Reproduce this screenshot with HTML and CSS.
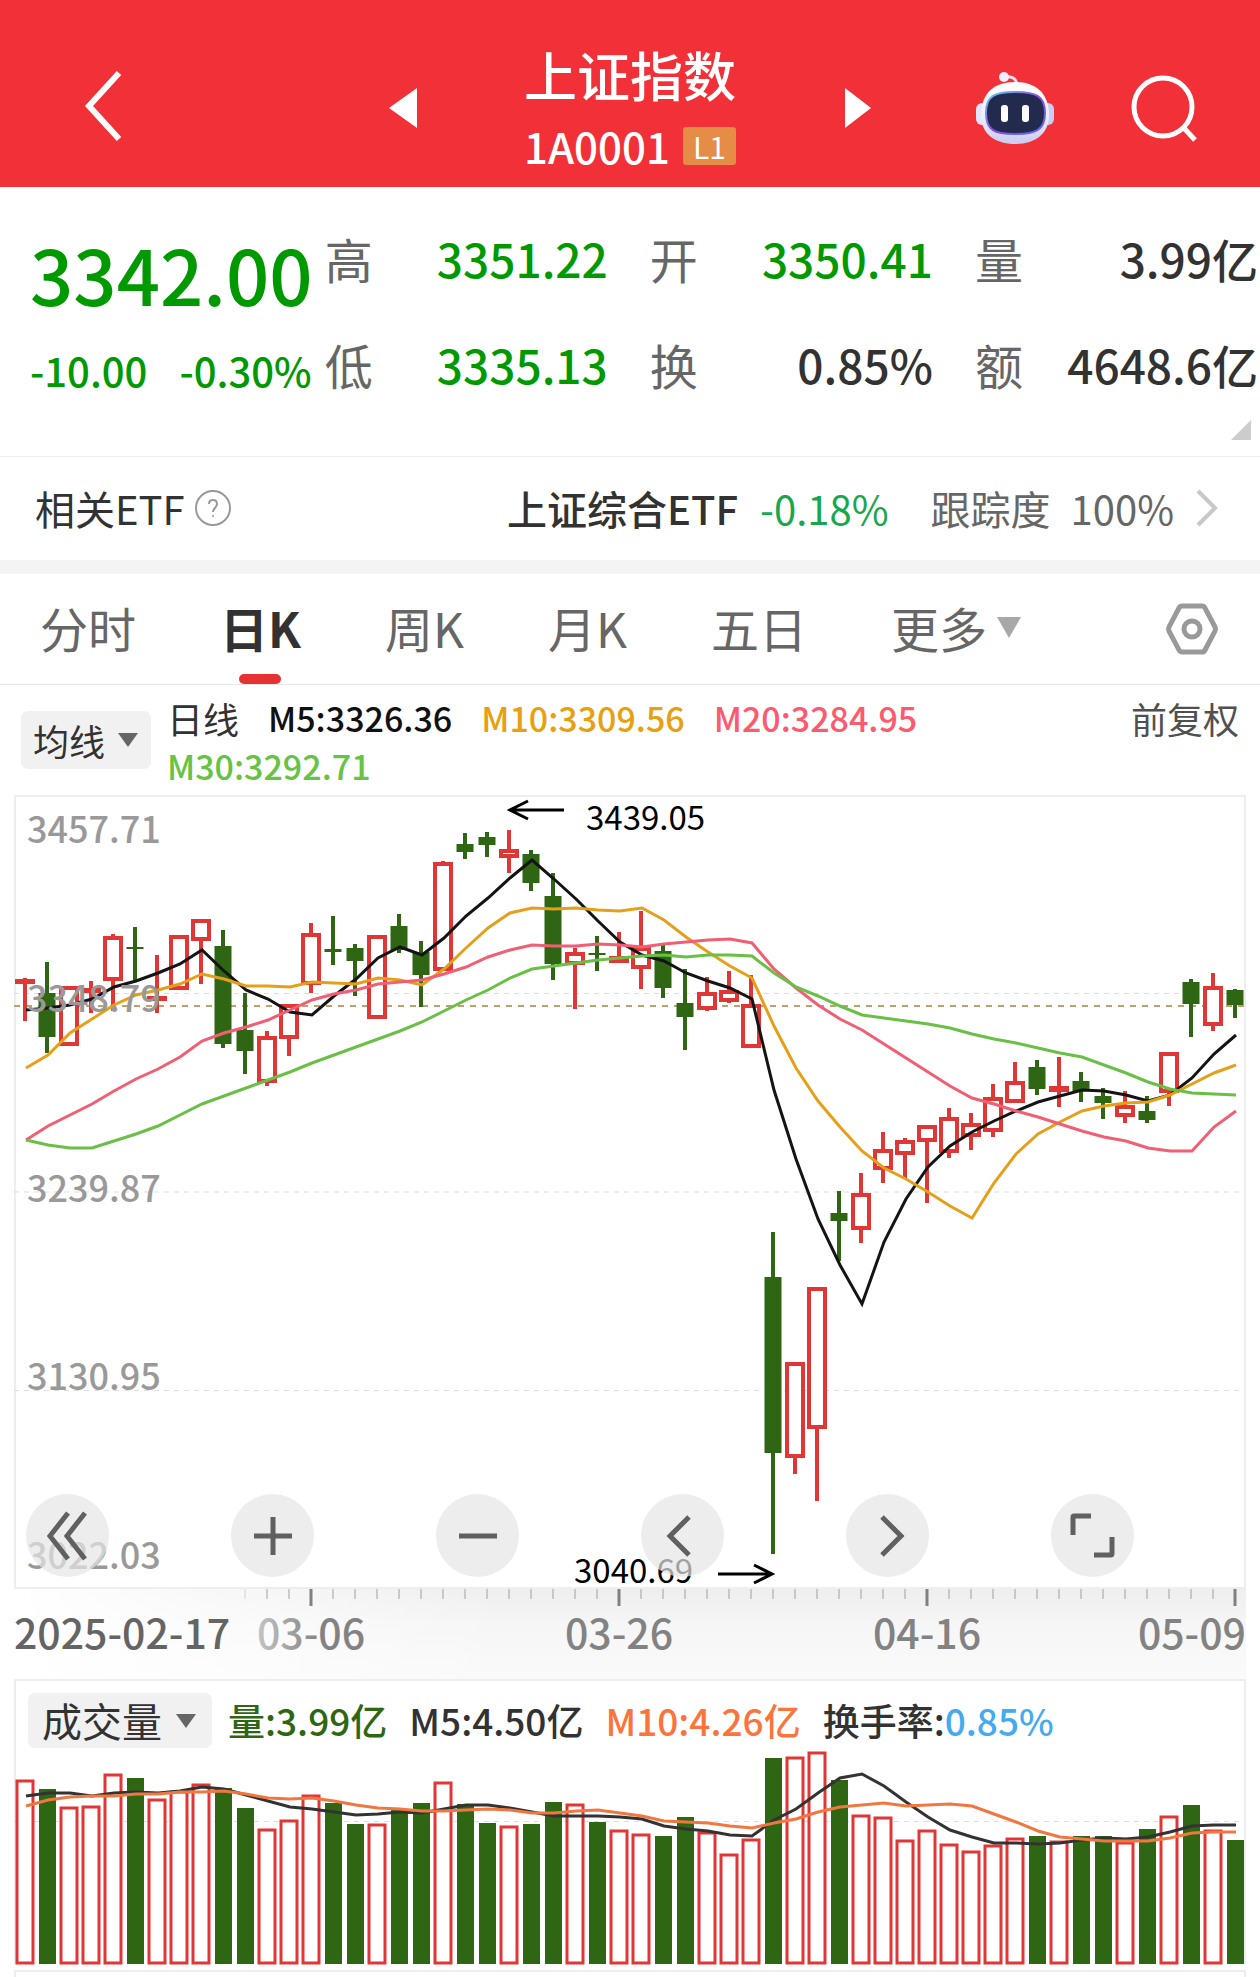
FILE: index.html
```
<!DOCTYPE html>
<html lang="zh-CN">
<head>
    <meta charset="UTF-8">
    <meta name="viewport" content="width=device-width, initial-scale=1.0">
    <title>上证指数</title>
    <link rel="stylesheet" href="styles.css">
</head>
<body>
    <header class="topbar">
        <div class="topbar-left">
            <button class="icon-btn" aria-label="返回">
                <svg width="42" height="72" viewBox="0 0 42 72"><path d="M37 3 L7 36 L37 69" fill="none" stroke="#fff" stroke-width="6"/></svg>
            </button>
        </div>
        <div class="topbar-center">
            <button class="icon-btn" aria-label="上一个">
                <svg width="28" height="40" viewBox="0 0 28 40"><path d="M28 0 V40 L0 20 Z" fill="#fff"/></svg>
            </button>
            <div class="title">
                <h1>上证指数</h1>
                <div class="code">
                    <span>1A0001</span>
                    <span class="level">L1</span>
                </div>
            </div>
            <button class="icon-btn" aria-label="下一个">
                <svg width="28" height="40" viewBox="0 0 28 40"><path d="M2 0 V40 L28 20 Z" fill="#fff"/></svg>
            </button>
        </div>
        <div class="topbar-right">
            <button class="icon-btn" aria-label="智能助手">
                <svg width="78" height="74" viewBox="0 0 78 74">
                    <defs>
                        <linearGradient id="shell" x1="0" y1="0" x2="0" y2="1">
                            <stop offset="0" stop-color="#ffffff"/>
                            <stop offset="0.6" stop-color="#eceafc"/>
                            <stop offset="1" stop-color="#c9cbf0"/>
                        </linearGradient>
                        <linearGradient id="rim" x1="0" y1="0" x2="1" y2="1">
                            <stop offset="0" stop-color="#5fd0e6"/>
                            <stop offset="0.5" stop-color="#8a4be0"/>
                            <stop offset="1" stop-color="#5a6be8"/>
                        </linearGradient>
                    </defs>
                    <path d="M28 6 Q40 4 41 14" fill="none" stroke="#e4e2f8" stroke-width="3"/>
                    <circle cx="28" cy="6" r="5" fill="#f1effc"/>
                    <rect x="0" y="32" width="12" height="22" rx="6" fill="#e3e4fa"/>
                    <rect x="66" y="32" width="12" height="22" rx="6" fill="#c9cdf5"/>
                    <path d="M39 11 C60 11 72 22 73 42 C74 62 60 73 39 73 C18 73 4 62 5 42 C6 22 18 11 39 11 Z" fill="url(#shell)"/>
                    <path d="M39 21 C60 21 69 25 69 42 C69 59 60 63 39 63 C18 63 10 59 10 42 C10 25 18 21 39 21 Z" fill="#222b4d" stroke="url(#rim)" stroke-width="2"/>
                    <rect x="25" y="34" width="7" height="17" rx="3" fill="#fff"/>
                    <rect x="46" y="34" width="7" height="17" rx="3" fill="#fff"/>
                </svg>
            </button>
            <button class="icon-btn" aria-label="搜索">
                <svg width="70" height="70" viewBox="0 0 70 70"><circle cx="33" cy="34" r="29" fill="none" stroke="#fff" stroke-width="5"/><path d="M53 54 L65 67" stroke="#fff" stroke-width="5"/></svg>
            </button>
        </div>
    </header>

    <section class="quote">
        <div class="price">
            <div class="last">3342.00</div>
            <div class="change"><span>-10.00</span><span>-0.30%</span></div>
        </div>
        <dl class="stats">
            <div><dt>高</dt><dd class="down">3351.22</dd></div>
            <div><dt>开</dt><dd class="down">3350.41</dd></div>
            <div><dt>量</dt><dd>3.99亿</dd></div>
            <div><dt>低</dt><dd class="down">3335.13</dd></div>
            <div><dt>换</dt><dd>0.85%</dd></div>
            <div><dt>额</dt><dd>4648.6亿</dd></div>
        </dl>
        <svg class="corner" width="20" height="20" viewBox="0 0 20 20"><path d="M20 0 V20 H0 Z" fill="#ccc"/></svg>
    </section>

    <section class="etf">
        <span>相关ETF</span>
        <svg width="36" height="36" viewBox="0 0 36 36"><circle cx="18" cy="18" r="17" fill="none" stroke="#999" stroke-width="2"/><path d="M14 14 Q14 10 18 10 Q22 10 22 14 Q22 16 20 18 Q18 20 18 22" fill="none" stroke="#999" stroke-width="2"/><circle cx="18" cy="26" r="1" fill="#999"/></svg>
        <a href="#" class="etf-link">
            <b>上证综合ETF</b>
            <span class="etf-change">-0.18%</span>
            <span class="etf-track"><span>跟踪度</span><span>100%</span></span>
            <svg width="22" height="38" viewBox="0 0 22 38"><path d="M2 2 L19 19 L2 36" fill="none" stroke="#c8c8c8" stroke-width="4"/></svg>
        </a>
    </section>

    <nav class="tabs">
        <button>分时</button>
        <button class="active">日K</button>
        <button>周K</button>
        <button>月K</button>
        <button>五日</button>
        <button>更多<svg width="24" height="21" viewBox="0 0 24 21"><path d="M0 0 H24 L12 21 Z" fill="#a8a8a8"/></svg></button>
        <button class="settings" aria-label="设置">
            <svg width="52" height="50" viewBox="0 0 52 50"><path d="M16 2 H36 Q38 2 39 4 L49 23 Q50 25 49 27 L39 46 Q38 48 36 48 H16 Q14 48 13 46 L3 27 Q2 25 3 23 L13 4 Q14 2 16 2 Z" fill="none" stroke="#999" stroke-width="5"/><circle cx="26" cy="25" r="8" fill="none" stroke="#999" stroke-width="5"/></svg>
        </button>
    </nav>

    <section class="averages">
        <button class="picker">均线<svg width="20" height="14" viewBox="0 0 20 14"><path d="M0 0 H20 L10 14 Z" fill="#666"/></svg></button>
        <div class="legend">
            <span class="period">日线</span>
            <span class="ma5">M5:3326.36</span>
            <span class="ma10">M10:3309.56</span>
            <span class="ma20">M20:3284.95</span>
            <span class="ma30">M30:3292.71</span>
        </div>
        <span class="adjust">前复权</span>
    </section>

    <section class="kline">
        <svg id="kline-chart" viewBox="16 797 1228 790"></svg>
        <div class="controls">
            <button aria-label="最早"><svg width="40" height="50" viewBox="0 0 40 50"><path d="M20 2 L2 25 L20 48 M37 2 L19 25 L37 48"/></svg></button>
            <button aria-label="放大"><svg width="40" height="50" viewBox="0 0 40 50"><path d="M1 25 H39 M20 6 V44"/></svg></button>
            <button aria-label="缩小"><svg width="40" height="50" viewBox="0 0 40 50"><path d="M1 25 H39"/></svg></button>
            <button aria-label="左移"><svg width="40" height="50" viewBox="0 0 40 50"><path d="M26 6 L7 25 L26 44"/></svg></button>
            <button aria-label="右移"><svg width="40" height="50" viewBox="0 0 40 50"><path d="M14 6 L33 25 L14 44"/></svg></button>
            <button aria-label="全屏"><svg width="44" height="50" viewBox="0 0 44 50"><path d="M2 24 V6 Q2 5 3 5 H20 M41 26 V42 Q41 44 40 44 H23"/></svg></button>
        </div>
    </section>

    <section class="axis">
        <svg id="axis-chart" viewBox="14 1589 1232 90"></svg>
    </section>

    <section class="volume">
        <div class="volume-head">
            <button class="picker large">成交量<svg width="20" height="14" viewBox="0 0 20 14"><path d="M0 0 H20 L10 14 Z" fill="#666"/></svg></button>
            <span class="vol">量:3.99亿</span>
            <span>M5:4.50亿</span>
            <span class="vol-ma10">M10:4.26亿</span>
            <span>换手率:<span class="turnover">0.85%</span></span>
        </div>
        <svg id="volume-chart" viewBox="16 1750 1228 214"></svg>
    </section>
    <section class="next-panel"></section>

    <script src="chart.js"></script>
</body>
</html>
```
FILE: styles.css
```
* {
    box-sizing: border-box;
}
body {
    margin: 0;
    background-color: #fff;
    color: #323232;
    font-family: "Noto Sans CJK SC", "Noto Sans", sans-serif;
}
h1, dl, dd {
    margin: 0;
}
button {
    padding: 0;
    border: none;
    background: none;
    color: inherit;
    font: inherit;
    cursor: pointer;
}
svg {
    display: block;
    overflow: visible;
}
a {
    color: inherit;
    text-decoration: none;
}

/* top bar */
.topbar {
    display: grid;
    grid-template-columns: 1fr auto 1fr;
    align-items: center;
    padding: 42px 60px 21px 82px;
    background-color: #f23037;
    color: #fff;
}
.topbar-center {
    display: flex;
    align-items: center;
    gap: 107px;
    margin-left: -22px;
}
.topbar-right {
    display: flex;
    align-items: center;
    justify-content: flex-end;
    gap: 76px;
}
.icon-btn {
    margin-top: 8px;
}
.title h1 {
    font-size: 53px;
    font-weight: 500;
    line-height: 64px;
}
.code {
    display: flex;
    align-items: center;
    justify-content: space-between;
    margin-top: 20px;
    height: 40px;
    font-size: 42px;
    font-weight: 500;
    line-height: 40px;
}
.level {
    padding: 0 10px;
    border-radius: 3px;
    background-color: #e58c47;
    font-size: 30px;
    font-weight: 400;
    line-height: 38px;
}

/* quote */
.quote {
    position: relative;
    display: flex;
    padding: 18px 2px 39px 30px;
    border-bottom: 1px solid #eee;
}
.price {
    width: 24%;
    padding-top: 26px;
    color: #009900;
    font-weight: 500;
}
.last {
    font-size: 76px;
    line-height: 84px;
}
.change {
    display: flex;
    gap: 32px;
    margin-top: 30px;
    font-size: 40px;
    line-height: 50px;
}
.stats {
    flex: 1;
    display: grid;
    grid-template-columns: repeat(3, 1fr);
    column-gap: 42px;
}
.stats div {
    display: flex;
    justify-content: space-between;
    font-size: 46px;
    line-height: 106px;
}
.stats dt {
    color: #666;
    font-size: 48px;
}
.stats dd {
    font-weight: 500;
}
.stats .down {
    color: #009900;
}
.corner {
    position: absolute;
    right: 9px;
    bottom: 16px;
}

/* related etf */
.etf {
    display: flex;
    align-items: center;
    gap: 10px;
    height: 103px;
    padding: 0 42px 2px 35px;
    font-size: 40px;
}
.etf-link {
    display: flex;
    align-items: center;
    margin-left: auto;
}
.etf-link b {
    font-weight: 500;
}
.etf-change {
    margin-left: 22px;
    color: #17a84f;
}
.etf-track {
    display: flex;
    gap: 20px;
    margin: 0 22px 0 42px;
    color: #666;
}

/* period tabs */
.tabs {
    display: flex;
    align-items: stretch;
    gap: 84px;
    height: 125px;
    padding: 0 42px 0 40px;
    border-top: 14px solid #f4f4f4;
    border-bottom: 1px solid #e6e6e6;
    color: #666;
    font-size: 48px;
}
.tabs button {
    position: relative;
    display: flex;
    align-items: center;
    gap: 10px;
    padding-bottom: 4px;
}
.tabs .active {
    color: #323232;
    font-weight: 700;
}
.tabs .active::after {
    content: "";
    position: absolute;
    left: 50%;
    bottom: 0;
    width: 42px;
    height: 10px;
    margin-left: -21px;
    border-radius: 5px;
    background-color: #e63232;
}
.tabs .settings {
    margin-left: auto;
    padding-bottom: 0;
}

/* moving averages */
.averages {
    display: flex;
    align-items: flex-start;
    height: 110px;
    padding: 9px 21px 0;
    font-size: 36px;
    line-height: 48px;
}
.picker {
    display: flex;
    align-items: center;
    justify-content: space-between;
    width: 130px;
    height: 58px;
    margin-top: 17px;
    padding: 0 13px 0 12px;
    border-radius: 7px;
    background-color: #f1f1f1;
}
.legend {
    flex: 1;
    display: flex;
    flex-wrap: wrap;
    column-gap: 29px;
    margin-left: 16px;
    font-size: 34px;
    font-weight: 500;
}
.legend .period {
    font-size: 36px;
    font-weight: 400;
}
.legend .ma5 {
    color: #101010;
}
.legend .ma10 {
    color: #e8a010;
}
.legend .ma20 {
    color: #fb5a70;
}
.legend .ma30 {
    color: #66c343;
}
.adjust {
    color: #505050;
}

/* candles */
.kline {
    position: relative;
    margin: 0 14px;
    border: 2px solid #eee;
}
.controls {
    position: absolute;
    left: 10px;
    bottom: 10px;
    display: flex;
    gap: 122px;
}
.controls button {
    display: flex;
    align-items: center;
    justify-content: center;
    width: 83px;
    height: 83px;
    border-radius: 50%;
    background-color: rgba(229, 229, 229, 0.7);
}
.controls path {
    fill: none;
    stroke: #606060;
    stroke-width: 5;
}
.up-body {
    fill: #fff;
    stroke: #e03636;
    stroke-width: 4;
}
.up-wick {
    stroke: #e03636;
    stroke-width: 4;
}
.down-body {
    fill: #2f6613;
}
.down-wick {
    stroke: #2f6613;
    stroke-width: 4;
}
.line {
    fill: none;
    stroke-width: 3;
}
.grid {
    stroke: #ddd;
    stroke-dasharray: 5 5;
}
.last-line {
    stroke: #bfa06a;
    stroke-width: 2;
    stroke-dasharray: 6 6;
}
.scale {
    fill: #999;
    font-size: 36px;
    font-weight: 500;
}
.extreme {
    fill: #000;
    font-size: 33px;
}
.arrow {
    fill: none;
    stroke: #000;
    stroke-width: 3;
}

/* dates */
.axis {
    margin: 0 14px;
    background: linear-gradient(to right, #fff 0%, rgba(255, 255, 255, 0) 40%), linear-gradient(#eee, #f6f6f6 40%, #fafafa);
}
.tick {
    stroke: #a0a0a0;
}
.tick.major {
    stroke: #808080;
    stroke-width: 3;
}
.date {
    fill: #828282;
    font-size: 41px;
    font-weight: 500;
}
.date.first {
    fill: #646464;
}

/* volume */
.volume {
    margin: 0 14px 6px;
    border: 2px solid #eee;
    border-bottom: none;
}
.volume-head {
    display: flex;
    align-items: center;
    gap: 22px;
    height: 69px;
    padding: 10px 12px 0;
    font-size: 37px;
    font-weight: 500;
    line-height: 55px;
}
.picker.large {
    width: 184px;
    height: 55px;
    margin: 0 -6px 0 0;
    padding: 0 16px 0 14px;
    font-size: 40px;
    font-weight: 400;
}
.vol {
    color: #2f6613;
}
.vol-ma10 {
    color: #fb743c;
}
.turnover {
    color: #45aaf0;
}
#volume-chart .up-body {
    stroke-width: 3;
}
.next-panel {
    height: 7px;
    margin: 0 14px;
    border: 2px solid #eee;
    border-bottom: none;
}
```
FILE: chart.js
```
const STEP = 22;
const START = 25;
const x = (i) => START + i * STEP;

// [rising, high, body top, body bottom, low]
const candles = [
    [1, 978, 979, 982, 1021], [0, 962, 993, 1037, 1053], [1, 986, 986, 1046, 1046], [1, 981, 988, 993, 1013],
    [1, 934, 936, 981, 1011], [0, 927, 947, 949, 980], [1, 955, 996, 1000, 1013], [1, 935, 935, 990, 990],
    [1, 919, 919, 941, 984], [0, 930, 946, 1044, 1048], [0, 993, 1030, 1051, 1074], [1, 1031, 1036, 1083, 1086],
    [1, 1004, 1004, 1039, 1056], [1, 923, 933, 985, 993], [0, 916, 949, 952, 965], [0, 944, 948, 961, 996],
    [1, 935, 935, 1019, 1019], [0, 914, 926, 950, 953], [0, 941, 952, 975, 1007], [1, 861, 862, 971, 971],
    [0, 833, 844, 852, 859], [0, 832, 837, 845, 857], [1, 830, 849, 858, 873], [0, 850, 854, 883, 891],
    [0, 873, 896, 964, 980], [1, 948, 952, 965, 1009], [0, 936, 953, 955, 971], [1, 932, 956, 963, 963],
    [1, 911, 947, 969, 989], [0, 945, 951, 988, 998], [0, 969, 1003, 1017, 1050], [1, 977, 992, 1010, 1011],
    [1, 971, 990, 1002, 1003], [1, 975, 1004, 1048, 1048], [0, 1232, 1277, 1453, 1554], [1, 1362, 1362, 1458, 1474],
    [1, 1287, 1287, 1429, 1501], [0, 1191, 1213, 1221, 1261], [1, 1173, 1193, 1230, 1243], [1, 1132, 1149, 1170, 1183],
    [1, 1138, 1140, 1155, 1179], [1, 1125, 1125, 1142, 1203], [1, 1108, 1117, 1153, 1158], [1, 1113, 1123, 1137, 1150],
    [1, 1084, 1097, 1132, 1137], [1, 1062, 1081, 1103, 1103], [0, 1060, 1067, 1089, 1095], [1, 1057, 1086, 1092, 1107],
    [0, 1072, 1081, 1091, 1102], [0, 1088, 1096, 1103, 1119], [1, 1091, 1105, 1117, 1123], [0, 1096, 1111, 1120, 1123],
    [1, 1052, 1052, 1093, 1106], [0, 979, 982, 1004, 1037], [1, 973, 986, 1026, 1031], [0, 989, 990, 1005, 1018]
];

const ma5 = [1010, 1008, 1005, 999, 987, 981, 973, 964, 950, 971, 990, 999, 1012, 1015, 996, 979, 958, 947, 955, 938, 916, 898, 878, 860, 879, 899, 921, 942, 955, 961, 973, 981, 988, 999, 1090, 1159, 1219, 1265, 1304, 1242, 1199, 1167, 1146, 1132, 1121, 1111, 1102, 1096, 1090, 1091, 1095, 1101, 1095, 1078, 1054, 1035];
const ma10 = [1068, 1055, 1033, 1019, 1005, 995, 990, 984, 974, 979, 986, 986, 987, 982, 983, 984, 978, 980, 985, 969, 948, 928, 913, 908, 909, 908, 910, 911, 908, 920, 937, 952, 966, 978, 1026, 1068, 1101, 1127, 1151, 1168, 1179, 1192, 1206, 1218, 1183, 1154, 1134, 1122, 1111, 1106, 1103, 1102, 1095, 1084, 1073, 1065];
const ma20 = [1140, 1126, 1115, 1104, 1091, 1079, 1069, 1057, 1041, 1033, 1027, 1020, 1010, 1000, 994, 990, 984, 982, 980, 974, 967, 957, 950, 945, 946, 946, 944, 945, 947, 944, 942, 940, 939, 943, 969, 988, 1005, 1019, 1030, 1044, 1058, 1072, 1086, 1098, 1104, 1111, 1117, 1124, 1131, 1137, 1141, 1148, 1151, 1151, 1127, 1111];
const ma30 = [1140, 1145, 1148, 1148, 1141, 1134, 1126, 1115, 1104, 1096, 1088, 1080, 1072, 1063, 1055, 1047, 1039, 1031, 1022, 1011, 1000, 990, 978, 969, 966, 963, 960, 958, 956, 955, 957, 955, 955, 956, 973, 987, 996, 1006, 1015, 1018, 1021, 1024, 1028, 1034, 1039, 1043, 1048, 1053, 1057, 1065, 1073, 1082, 1089, 1093, 1094, 1095];

const volumes = [1780, 1789, 1807, 1806, 1774, 1778, 1799, 1791, 1784, 1788, 1808, 1829, 1820, 1795, 1803, 1824, 1824, 1810, 1803, 1782, 1804, 1823, 1826, 1824, 1802, 1804, 1822, 1830, 1834, 1836, 1817, 1832, 1854, 1839, 1758, 1757, 1752, 1780, 1815, 1817, 1840, 1830, 1844, 1851, 1845, 1838, 1836, 1841, 1836, 1836, 1842, 1829, 1816, 1805, 1830, 1840];
const volMa5 = [1796, 1793, 1793, 1796, 1793, 1792, 1793, 1791, 1787, 1789, 1795, 1801, 1807, 1809, 1812, 1815, 1814, 1812, 1813, 1809, 1805, 1805, 1808, 1812, 1816, 1816, 1816, 1817, 1819, 1826, 1829, 1831, 1835, 1836, 1820, 1809, 1793, 1778, 1774, 1786, 1802, 1817, 1830, 1837, 1843, 1843, 1844, 1843, 1840, 1838, 1839, 1837, 1832, 1826, 1825, 1825];
const volMa10 = [1806, 1800, 1797, 1796, 1796, 1794, 1794, 1792, 1792, 1791, 1794, 1798, 1799, 1798, 1801, 1805, 1808, 1809, 1811, 1811, 1810, 1809, 1810, 1813, 1813, 1811, 1810, 1813, 1816, 1821, 1822, 1823, 1826, 1828, 1823, 1819, 1812, 1807, 1805, 1803, 1806, 1805, 1804, 1806, 1814, 1822, 1831, 1837, 1839, 1841, 1841, 1841, 1838, 1833, 1832, 1832];

function line(values, color) {
    const points = values.map((y, i) => `${x(i) + 1},${y}`).join(" ");
    return `<polyline class="line" stroke="${color}" points="${points}"/>`;
}

function rule(y, cls) {
    return `<line class="${cls}" x1="14" x2="1244" y1="${y}" y2="${y}"/>`;
}

function candle([up, high, top, bottom, low], i) {
    const kind = up ? "up" : "down";
    const wick = `<path class="${kind}-wick" d="M${x(i)} ${high} V${top} M${x(i)} ${bottom} V${low}"/>`;
    if (up) {
        return wick + `<rect class="up-body" x="${x(i) - 8}" y="${top + 2}" width="16" height="${Math.max(bottom - top - 4, 1)}"/>`;
    }
    return wick + `<rect class="down-body" x="${x(i) - 8.5}" y="${top}" width="17" height="${bottom - top}"/>`;
}

function volumeBar(top, i) {
    if (candles[i][0]) {
        return `<rect class="up-body" x="${x(i) - 8}" y="${top + 1}" width="16" height="${1962 - top}"/>`;
    }
    return `<rect class="down-body" x="${x(i) - 8}" y="${top}" width="17" height="${1964 - top}"/>`;
}

// candle chart
let html = rule(993.5, "grid") + rule(1192, "grid") + rule(1390.5, "grid") + rule(1006, "last-line");
html += candles.map(candle).join("");
html += line(ma5, "#141414") + line(ma10, "#e5a01a") + line(ma20, "#f05f74") + line(ma30, "#6abf47");
const scale = [["3457.71", 843], ["3348.79", 1012], ["3239.87", 1202], ["3130.95", 1390], ["3022.03", 1569]];
html += scale.map(([text, y]) => `<text class="scale" x="27" y="${y}">${text}</text>`).join("");
html += `<path class="arrow" d="M564 810 H510 M528 801 L510 810 L528 819"/><text class="extreme" x="586" y="830">3439.05</text>`;
html += `<path class="arrow" d="M718 1574 H772 M754 1565 L772 1574 L754 1583"/><text class="extreme" x="574" y="1583">3040.69</text>`;
document.getElementById("kline-chart").innerHTML = html;

// date axis, the left end fades out under the first date
html = `<defs><linearGradient id="fade" gradientUnits="userSpaceOnUse" x1="230" x2="320" y1="0" y2="0"><stop offset="0" stop-color="#e0e0e0"/><stop offset="1" stop-color="#828282"/></linearGradient></defs>`;
for (let i = 10; i < candles.length; i++) {
    const major = (i - 13) % 14 === 0;
    html += `<line class="tick${major ? " major" : ""}" x1="${x(i)}" x2="${x(i)}" y1="1589" y2="${major ? 1606 : 1599}"${i === 10 ? ' opacity="0.4"' : ""}/>`;
}
html += `<text class="date first" x="14" y="1649">2025-02-17</text>`;
html += `<text class="date" x="311" y="1649" text-anchor="middle" style="fill: url(#fade)">03-06</text>`;
html += `<text class="date" x="619" y="1649" text-anchor="middle">03-26</text>`;
html += `<text class="date" x="927" y="1649" text-anchor="middle">04-16</text>`;
html += `<text class="date" x="1246" y="1649" text-anchor="end">05-09</text>`;
document.getElementById("axis-chart").innerHTML = html;

// volume chart
html = rule(1821.5, "grid") + volumes.map(volumeBar).join("");
html += line(volMa5, "#333333") + line(volMa10, "#f07840");
document.getElementById("volume-chart").innerHTML = html;
```
